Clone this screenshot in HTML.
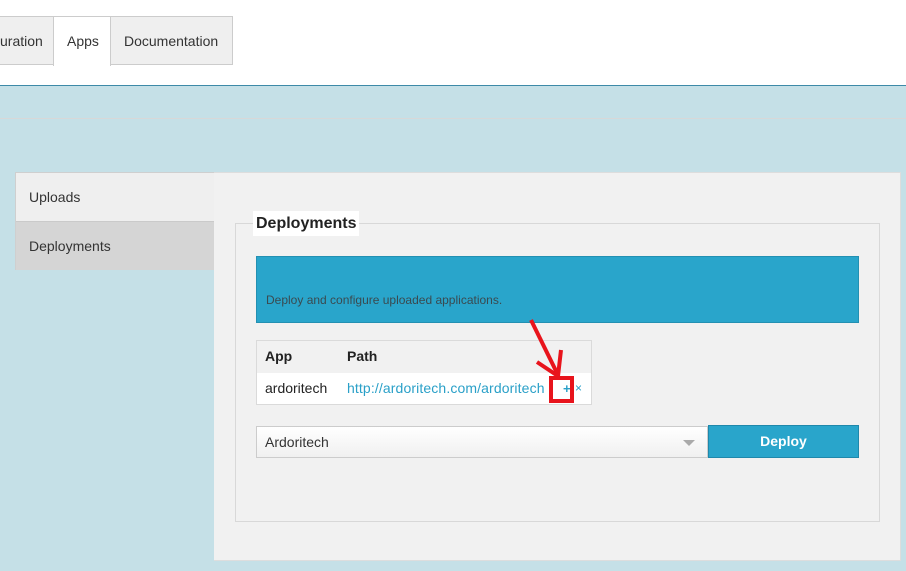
<!DOCTYPE html>
<html><head><meta charset="utf-8"><style>
*{box-sizing:border-box;margin:0;padding:0}
body{width:906px;height:571px;overflow:hidden;background:#c5e0e7;font-family:"Liberation Sans",Arial,sans-serif;font-size:14px;color:#222;position:relative}
.abs{position:absolute}
.top{left:0;top:0;width:906px;height:86px;background:#fff;border-bottom:1px solid #3d8aa8}
.tab{top:16px;height:49px;border:1px solid #ccc;background:#efefef;line-height:48px;color:#333;padding:0 13px}
.sep{left:0;top:118px;width:906px;height:1px;background:#d8d8d8}
.side{left:15px;top:172px;width:200px;height:98px;border:1px solid #cfcfcf;background:#efefef}
.side div{height:48px;line-height:48px;padding-left:13px;color:#333}
.panel{left:214px;top:172px;width:687px;height:389px;background:#f1f1f1;border:1px solid #ddd;border-left:none}
</style></head><body>
<div class="abs top"></div>
<div class="abs tab" style="left:-10px;width:64px;padding:0 0 0 10px;border-left:none">uration</div>
<div class="abs tab" style="left:53px;width:58px;background:#fff;border-bottom:none;height:50px">Apps</div>
<div class="abs tab" style="left:110px;width:123px">Documentation</div>
<div class="abs sep"></div>
<div class="abs side"><div>Uploads</div><div style="background:#d5d5d5;border-top:1px solid #cacaca;height:49px">Deployments</div></div>
<div class="abs panel"></div>
<div class="abs" style="left:235px;top:223px;width:645px;height:299px;border:1px solid #d8d8d8"></div>
<div class="abs" style="left:253px;top:211px;padding:0 3px;background:#fff;font-weight:bold;font-size:16px;line-height:25px;color:#222">Deployments</div>
<div class="abs" style="left:256px;top:256px;width:603px;height:67px;background:#29a5cb;border:1px solid #2390b2;font-size:12px;color:#3a4a50;padding:36px 0 0 9px">Deploy and configure uploaded applications.</div>
<div class="abs" style="left:256px;top:340px;width:336px;height:65px;border:1px solid #dadada;background:#f1f1f1">
<div style="height:32px;line-height:31px;font-weight:bold;padding-left:8px">App<span style="position:absolute;left:90px">Path</span></div>
<div style="height:31px;line-height:31px;background:#fff;padding-left:8px">ardoritech<span style="position:absolute;left:90px;color:#2aa0c8;letter-spacing:0.12px">http://ardoritech.com/ardoritech</span><span style="position:absolute;left:306px;color:#2aa0c8;font-weight:bold;font-size:13px">+</span><span style="position:absolute;left:318px;color:#2aa0c8;font-size:12px">×</span></div>
</div>
<div class="abs" style="left:256px;top:426px;width:452px;height:32px;border:1px solid #ccc;background:linear-gradient(#fff,#f0f0f0);line-height:30px;padding-left:8px;color:#333">Ardoritech
<div style="position:absolute;right:12px;top:13px;border-left:6px solid transparent;border-right:6px solid transparent;border-top:6px solid #aaa"></div></div>
<div class="abs" style="left:708px;top:425px;width:151px;height:33px;background:#29a5cb;border:1px solid #1f88ab;color:#fff;font-weight:bold;text-align:center;line-height:31px">Deploy</div>
<svg class="abs" style="left:0;top:0" width="906" height="571">
<path d="M531 320 L557 373" stroke="#e8141c" stroke-width="4" fill="none"/>
<path d="M537 362 L558 376 L561 350" stroke="#e8141c" stroke-width="4" fill="none"/>
<rect x="551" y="378" width="21" height="23" fill="none" stroke="#e8141c" stroke-width="4"/>
</svg>
</body></html>
